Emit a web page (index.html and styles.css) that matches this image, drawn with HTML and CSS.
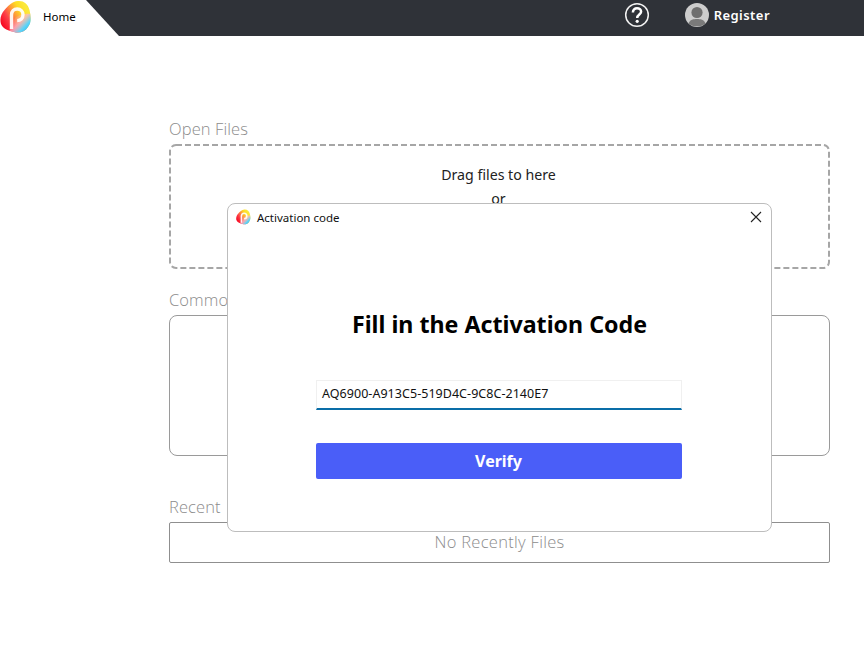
FILE: index.html
```html
<!DOCTYPE html>
<html lang="en">
<head>
<meta charset="utf-8">
<title>Home</title>
<link rel="stylesheet" href="styles.css">
</head>
<body>
<svg class="defs" width="0" height="0" aria-hidden="true">
  <defs>
    <linearGradient id="lg-a" x1="0" y1="0.65" x2="0.8" y2="0.15">
      <stop offset="0" stop-color="#f80a22"/>
      <stop offset="0.28" stop-color="#fc3f48"/>
      <stop offset="0.55" stop-color="#fe9a3a"/>
      <stop offset="0.78" stop-color="#ffdc22"/>
      <stop offset="1" stop-color="#fbe83a"/>
    </linearGradient>
    <linearGradient id="lg-b" x1="0.1" y1="0.3" x2="0.85" y2="0.95">
      <stop offset="0" stop-color="#ffb0c0" stop-opacity="0"/>
      <stop offset="0.4" stop-color="#fdb8cc" stop-opacity=".75"/>
      <stop offset="0.72" stop-color="#5fd4f6"/>
      <stop offset="1" stop-color="#2fbcfb"/>
    </linearGradient>
    <symbol id="logo" viewBox="0 0 32 34">
      <path d="M18 1C24 .5 28 4 29.500 10C31 16 31.500 22 28 27C25 32 19 33.500 14 32C9 31 3 29 1 24C-.5 19 1 14 4.500 10C8 6 12 1.500 18 1Z" fill="url(#lg-a)"/>
      <path d="M30.200 14C31 20 31 23 28 27C25 32 19 33.500 14 32C12.500 31.700 11 31.300 9.500 30.800C10 25 12 20 16 17C20 14 26 13 30.200 14Z" fill="url(#lg-b)"/>
      <path d="M11.500 29V15C11.500 11 14 9 17.200 9C20.700 9 23 11.600 23 14.800C23 18.200 20.500 20.600 17.200 20.600" fill="none" stroke="#fff" stroke-opacity=".92" stroke-width="3.400"/>
    </symbol>
  </defs>
</svg>

<header class="topbar">
  <div class="tab">
    <svg class="tab-logo"><use href="#logo"/></svg>
    <span class="tab-label">Home</span>
  </div>
  <div class="topbar-actions">
    <svg class="help" viewBox="0 0 26 26" aria-hidden="true">
      <circle cx="13" cy="13" r="11.300" fill="none" stroke="#f2f2f2" stroke-width="1.500"/>
      <path d="M8.900 10.400C8.900 7.900 10.700 6.300 13 6.300C15.400 6.300 17.100 7.800 17.100 9.800C17.100 12.500 13.200 12.700 13.200 16" fill="none" stroke="#fff" stroke-width="2.500"/>
      <circle cx="13.200" cy="19.300" r="1.600" fill="#fff"/>
    </svg>
    <div class="user">
      <svg class="avatar" viewBox="0 0 24 24" aria-hidden="true">
        <circle cx="12" cy="12" r="12" fill="#cdcdcd"/>
        <circle cx="12" cy="9.500" r="5.600" fill="#6f6f6f"/>
        <path d="M3.500 20.500C5 16.500 8.500 16 12 16C15.500 16 19 16.500 20.500 20.500C18.300 22.700 15.300 23.300 12 23.300C8.700 23.300 5.700 22.700 3.500 20.500Z" fill="#7a7a7a"/>
      </svg>
      <span class="user-name">Register</span>
    </div>
  </div>
</header>

<main class="content">
  <section class="group group-open">
    <h2 class="group-title">Open Files</h2>
    <div class="dropzone">
      <svg class="dash-frame" width="661" height="125" aria-hidden="true">
        <rect x="1" y="1" width="659" height="123" rx="6" ry="6"/>
      </svg>
      <p class="drop-line">Drag files to here</p>
      <p class="drop-line">or</p>
    </div>
  </section>
  <section class="group group-common">
    <h2 class="group-title">Common</h2>
    <div class="common-box"></div>
  </section>
  <section class="group group-recent">
    <h2 class="group-title">Recent</h2>
    <div class="recent-box">No Recently Files</div>
  </section>
</main>

<div class="dialog" role="dialog">
  <div class="dialog-head">
    <svg class="dialog-logo"><use href="#logo"/></svg>
    <span class="dialog-title">Activation code</span>
    <svg class="dialog-close" viewBox="0 0 12 12" aria-hidden="true">
      <path d="M1 1L11 11M11 1L1 11" fill="none" stroke="#222" stroke-width="1.100"/>
    </svg>
  </div>
  <div class="dialog-body">
    <h1 class="dialog-heading">Fill in the Activation Code</h1>
    <div class="code-field">AQ6900-A913C5-519D4C-9C8C-2140E7</div>
    <button class="verify" type="button">Verify</button>
  </div>
</div>
</body>
</html>
```
FILE: styles.css
```css
* { box-sizing: border-box; }
html, body { margin: 0; padding: 0; }
body {
  width: 864px;
  height: 646px;
  overflow: hidden;
  position: relative;
  background: #fff;
  color: #111;
  font-family: "Noto Sans", "Open Sans", sans-serif;
}
.defs { position: absolute; }

.topbar {
  height: 36px;
  background: #2f3238;
  display: flex;
  align-items: center;
  justify-content: space-between;
}
.tab {
  width: 119px;
  height: 36px;
  background: #fff;
  clip-path: polygon(0 0, 86px 0, 119px 36px, 0 36px);
  display: flex;
  align-items: center;
  padding-bottom: 3px;
}
.tab-logo { width: 32px; height: 34px; flex: none; }
.tab-label { margin-left: 11px; font-size: 11.500px; color: #000; }
.topbar-actions {
  display: flex;
  align-items: center;
  padding-right: 94px;
  padding-bottom: 6px;
}
.help { width: 26px; height: 26px; display: block; }
.user { display: flex; align-items: center; margin-left: 35px; }
.avatar { width: 24px; height: 24px; display: block; }
.user-name { margin-left: 5px; font-size: 13px; font-weight: 600; color: #fff; letter-spacing: .45px; }

.content { padding: 82px 34px 0 169px; }
.group-title {
  margin: 0;
  font-family: "Open Sans", "Noto Sans", sans-serif;
  font-size: 16.500px;
  font-weight: 300;
  line-height: 22px;
  letter-spacing: .1px;
  color: #8c8c8c;
}
.dropzone {
  position: relative;
  height: 125px;
  margin-top: 4px;
  padding-top: 19px;
  text-align: center;
}
.dash-frame { position: absolute; left: 0; top: 0; display: block; }
.dash-frame rect {
  fill: none;
  stroke: #a6a6a6;
  stroke-width: 2;
  stroke-dasharray: 6 3;
}
.drop-line { margin: 0 2px 0 0; font-size: 14.200px; line-height: 24px; color: #222; }
.group-common { margin-top: 20px; }
.common-box {
  height: 141px;
  margin-top: 4px;
  border: 1px solid #9a9a9a;
  border-radius: 8px;
}
.group-recent { margin-top: 40px; }
.recent-box {
  height: 41px;
  margin-top: 4px;
  border: 1px solid #8f8f8f;
  border-radius: 2px;
  padding-bottom: 2px;
  display: flex;
  align-items: center;
  justify-content: center;
  font-family: "Open Sans", "Noto Sans", sans-serif;
  font-size: 16.500px;
  font-weight: 300;
  letter-spacing: .3px;
  color: #8c8c8c;
}

.dialog {
  position: absolute;
  left: 227px;
  top: 203px;
  width: 545px;
  height: 329px;
  background: #fff;
  border: 1px solid #bdbdbd;
  border-radius: 8px;
}
.dialog-head {
  display: flex;
  align-items: center;
  height: 26px;
  padding: 0 9px 0 8px;
}
.dialog-logo { width: 15px; height: 16px; flex: none; }
.dialog-title { margin-left: 6px; font-size: 11.500px; color: #111; flex: 1; }
.dialog-close { width: 12px; height: 12px; flex: none; }
.dialog-body {
  display: flex;
  flex-direction: column;
  align-items: center;
  padding-right: 2px;
}
.dialog-heading {
  margin: 76px 0 0 2px;
  font-size: 23.200px;
  line-height: 36px;
  font-weight: 700;
  color: #000;
}
.code-field {
  width: 366px;
  height: 30px;
  margin-top: 38px;
  padding: 0 5px 0 5.500px;
  background: #fff;
  border: 1px solid #f0f0f0;
  border-bottom: 2px solid #0a6ea8;
  font-size: 12.500px;
  line-height: 25px;
  letter-spacing: .04px;
  color: #111;
}
.verify {
  width: 366px;
  height: 36px;
  margin-top: 33px;
  border: 0;
  border-radius: 2px;
  background: #4a5ef8;
  color: #fff;
  font-family: "Noto Sans", sans-serif;
  font-size: 16px;
  font-weight: 700;
}
```
